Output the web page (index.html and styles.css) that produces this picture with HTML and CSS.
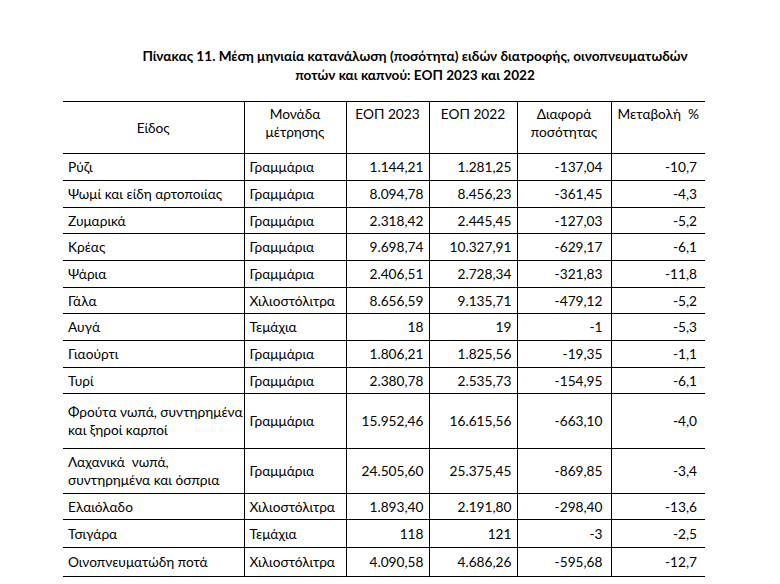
FILE: index.html
```html
<!DOCTYPE html>
<html lang="el">
<head>
<meta charset="utf-8">
<link rel="stylesheet" href="styles.css">
</head>
<body>
<div class="page">
  <h1 class="title">Πίνακας 11. Μέση μηνιαία κατανάλωση (ποσότητα) ειδών διατροφής, οινοπνευματωδών<br>ποτών και καπνού: ΕΟΠ 2023 και 2022</h1>
  <table class="data">
    <colgroup>
      <col class="c1"><col class="c2"><col class="c3"><col class="c4"><col class="c5"><col class="c6">
    </colgroup>
    <thead>
      <tr class="h-head">
        <th class="mid">Είδος</th>
        <th>Μονάδα<br>μέτρησης</th>
        <th>ΕΟΠ 2023</th>
        <th>ΕΟΠ 2022</th>
        <th>Διαφορά<br>ποσότητας</th>
        <th>Μεταβολή&nbsp; %</th>
      </tr>
    </thead>
    <tbody>
      <tr class="h27"><td>Ρύζι</td><td>Γραμμάρια</td><td class="n">1.144,21</td><td class="n">1.281,25</td><td class="n w">-137,04</td><td class="n w">-10,7</td></tr>
      <tr class="h27"><td>Ψωμί και είδη αρτοποιίας</td><td>Γραμμάρια</td><td class="n">8.094,78</td><td class="n">8.456,23</td><td class="n w">-361,45</td><td class="n w">-4,3</td></tr>
      <tr class="h26"><td>Ζυμαρικά</td><td>Γραμμάρια</td><td class="n">2.318,42</td><td class="n">2.445,45</td><td class="n w">-127,03</td><td class="n w">-5,2</td></tr>
      <tr class="h27"><td>Κρέας</td><td>Γραμμάρια</td><td class="n">9.698,74</td><td class="n">10.327,91</td><td class="n w">-629,17</td><td class="n w">-6,1</td></tr>
      <tr class="h27"><td>Ψάρια</td><td>Γραμμάρια</td><td class="n">2.406,51</td><td class="n">2.728,34</td><td class="n w">-321,83</td><td class="n w">-11,8</td></tr>
      <tr class="h26"><td>Γάλα</td><td>Χιλιοστόλιτρα</td><td class="n">8.656,59</td><td class="n">9.135,71</td><td class="n w">-479,12</td><td class="n w">-5,2</td></tr>
      <tr class="h27"><td>Αυγά</td><td>Τεμάχια</td><td class="n">18</td><td class="n">19</td><td class="n w">-1</td><td class="n w">-5,3</td></tr>
      <tr class="h27"><td>Γιαούρτι</td><td>Γραμμάρια</td><td class="n">1.806,21</td><td class="n">1.825,56</td><td class="n w">-19,35</td><td class="n w">-1,1</td></tr>
      <tr class="h26"><td>Τυρί</td><td>Γραμμάρια</td><td class="n">2.380,78</td><td class="n">2.535,73</td><td class="n w">-154,95</td><td class="n w">-6,1</td></tr>
      <tr class="h55"><td>Φρούτα νωπά, συντηρημένα<br>και ξηροί καρποί</td><td>Γραμμάρια</td><td class="n">15.952,46</td><td class="n">16.615,56</td><td class="n w">-663,10</td><td class="n w">-4,0</td></tr>
      <tr class="h45"><td>Λαχανικά&nbsp; νωπά,<br>συντηρημένα και όσπρια</td><td>Γραμμάρια</td><td class="n">24.505,60</td><td class="n">25.375,45</td><td class="n w">-869,85</td><td class="n w">-3,4</td></tr>
      <tr class="h26"><td>Ελαιόλαδο</td><td>Χιλιοστόλιτρα</td><td class="n">1.893,40</td><td class="n">2.191,80</td><td class="n w">-298,40</td><td class="n w">-13,6</td></tr>
      <tr class="h28"><td>Τσιγάρα</td><td>Τεμάχια</td><td class="n">118</td><td class="n">121</td><td class="n w">-3</td><td class="n w">-2,5</td></tr>
      <tr class="h29"><td>Οινοπνευματώδη ποτά</td><td>Χιλιοστόλιτρα</td><td class="n">4.090,58</td><td class="n">4.686,26</td><td class="n w">-595,68</td><td class="n w">-12,7</td></tr>
    </tbody>
  </table>
</div>
</body>
</html>
```

FILE: styles.css
```css
html, body {
  margin: 0;
  padding: 0;
  background: #fff;
}
body {
  font-family: Lato, "Open Sans", "Noto Sans", sans-serif;
  color: #000;
  width: 780px;
  height: 584px;
  overflow: hidden;
}
.page {
  padding-top: 47px;
}
.title {
  margin: 0 0 16px 0;
  padding-left: 50px;
  font-size: 13.6px;
  line-height: 19px;
  font-weight: bold;
  text-align: center;
}
.data {
  margin-left: 63px;
  width: 642px;
  border-collapse: collapse;
  table-layout: fixed;
  font-size: 13.7px;
  line-height: 18px;
}
.c1 { width: 181px; }
.c2 { width: 102px; }
.c3 { width: 83px; }
.c4 { width: 88px; }
.c5 { width: 94px; }
.c6 { width: 94px; }
.data th, .data td {
  border-top: 1px solid #000;
  border-bottom: 1px solid #000;
  border-left: 1px solid #000;
  padding: 0 5px;
  vertical-align: middle;
  white-space: nowrap;
}
.data th:first-child, .data td:first-child {
  border-left: none;
}
.data th {
  font-weight: normal;
  text-align: center;
  vertical-align: top;
  padding-top: 3px;
}
.data th.mid {
  vertical-align: middle;
  padding-top: 0;
}
.data td.n {
  text-align: right;
}
.data td.w {
  padding-right: 8px;
}
.h-head { height: 52px; }
.h26 { height: 26px; }
.h27 { height: 27px; }
.h28 { height: 28px; }
.h29 { height: 29px; }
.h45 { height: 45px; }
.h55 { height: 55px; }
```
